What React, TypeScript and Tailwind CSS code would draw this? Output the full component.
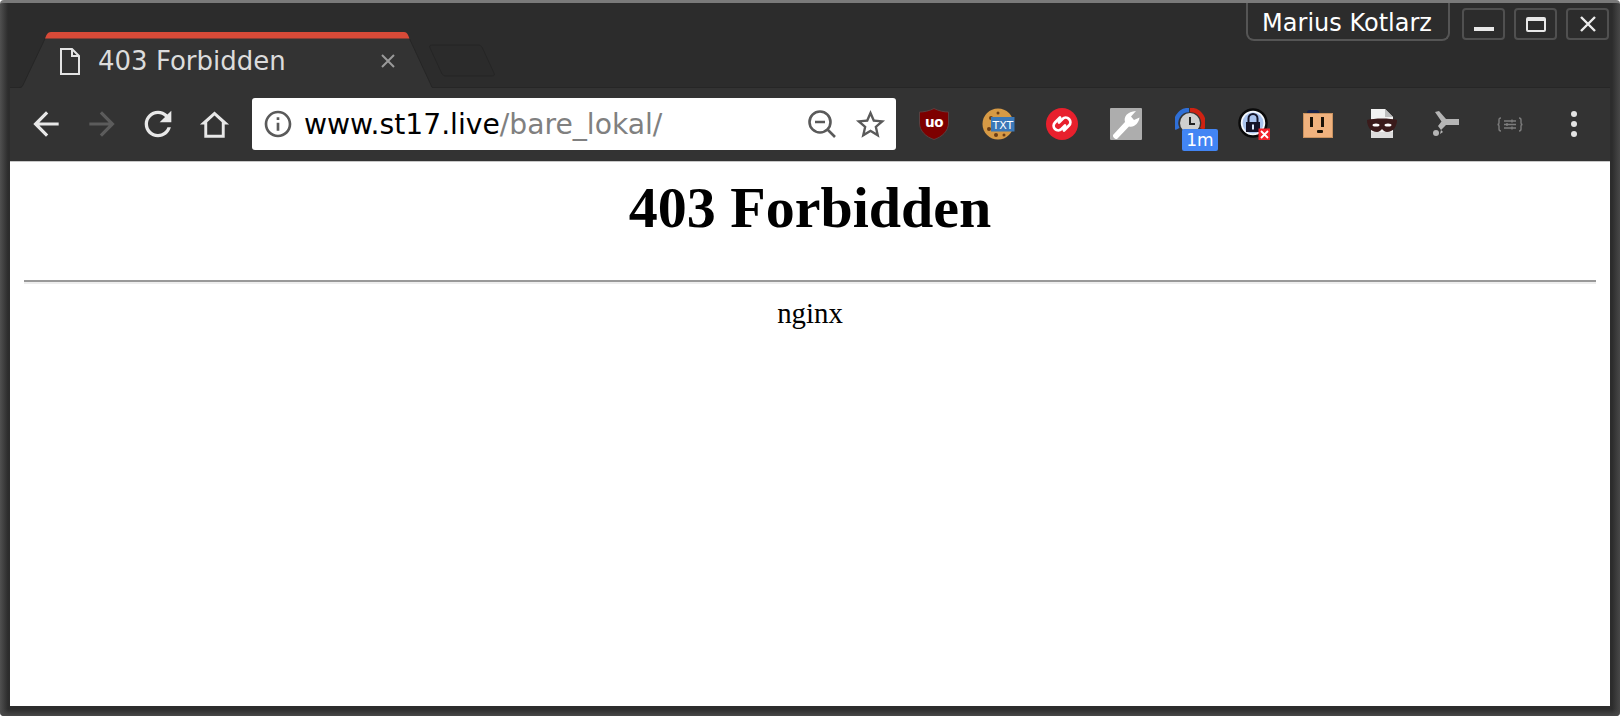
import type { ReactNode } from "react";

const sans = "font-['DejaVu_Sans',sans-serif]";

function Ext({ children }: { children: ReactNode }) {
  return <div className="relative flex h-full w-[64px] items-center justify-center">{children}</div>;
}

function TabStrip() {
  return (
    <div className="flex h-[84px] shrink-0 items-start justify-between">
      <div className="flex h-full items-end pl-[19px]">
        <div className="relative z-10 -mb-[1px] h-[56px] w-[414px]">
          <svg className="absolute inset-0" width="414" height="56" viewBox="0 0 414 56">
            <path d="M0 56C2 56 3 55 4 53L27 4.5C28 1.5 30 0 32 0H385C387 0 388.5 1.5 389.5 4.5L412 53C412.5 55 413 56 414 56Z" fill="#333333" />
            <path d="M0 55.5C2 55.5 3 55 4 53L27 4.5M389.5 4.5L412 53C412.5 55 413 55.5 414 55.5" fill="none" stroke="#262626" />
            <path d="M26 6.5L27.5 3C28.5 1 30 0 32 0H385C387 0 388 1 389 3L390.5 6.5Z" fill="#d84a38" />
          </svg>
          <div className="relative flex h-full items-center pl-[41px] pt-[2px]">
            <svg width="20" height="27" viewBox="0 0 20 27" fill="none" stroke="#e4e4e4" strokeWidth="2">
              <path d="M1 1H12L19 8V26H1Z" />
              <path d="M12 1V8H19" />
            </svg>
            <span className={`${sans} ml-[18px] w-[260px] text-[26px] leading-none text-[#dcdcdc]`}>403 Forbidden</span>
            <svg width="16" height="16" viewBox="0 0 16 16" stroke="#9a9a9a" strokeWidth="2" className="ml-[22px]">
              <path d="M2 2L14 14M14 2L2 14" />
            </svg>
          </div>
        </div>
        <svg width="68" height="34" viewBox="0 0 68 34" className="mb-[9px] -ml-[5px]">
          <path d="M4 1H50C52 1 53 2 54 3L66 29C67 31 66 32 64 32H18C16 32 15 31 14 30L2 4C1 2 2 1 4 1Z" fill="#2b2b2b" stroke="#252525" />
        </svg>
      </div>
      <div className="flex items-start pr-[11px]">
        <div className={`${sans} flex h-[38px] w-[204px] items-center justify-center rounded-b-[8px] border-2 border-t-0 border-[#555555] pr-[2px] pt-[3px] text-[24px] text-white`}>Marius Kotlarz</div>
        <div className="ml-[12px] mt-[5px] flex gap-[9px]">
          <div className="flex h-[32px] w-[43px] items-center justify-center rounded-[4px] border-2 border-[#505050]">
            <div className="mt-[10px] h-[4px] w-[20px] bg-[#e8e8e8]" />
          </div>
          <div className="flex h-[32px] w-[43px] items-center justify-center rounded-[4px] border-2 border-[#505050]">
            <div className="h-[15px] w-[20px] rounded-[2px] border-2 border-t-[4px] border-[#e8e8e8]" />
          </div>
          <div className="flex h-[32px] w-[43px] items-center justify-center rounded-[4px] border-2 border-[#505050]">
            <svg width="18" height="18" viewBox="0 0 18 18" stroke="#ececec" strokeWidth="2.4">
              <path d="M2 2L16 16M16 2L2 16" />
            </svg>
          </div>
        </div>
      </div>
    </div>
  );
}

function NavButton({ d, color, size }: { d: string; color: string; size: number }) {
  return (
    <div className="flex h-full w-[56px] items-center justify-center">
      <svg width={size} height={size} viewBox="0 0 24 24" fill={color}>
        <path d={d} />
      </svg>
    </div>
  );
}

function AddressBar() {
  return (
    <div className="ml-[10px] flex h-[52px] w-[644px] items-center rounded-[3px] bg-white pl-[10px] pr-[8px]">
      <svg width="32" height="32" viewBox="0 0 24 24" fill="#5a5a5a">
        <path d="M11 7h2v2h-2zm0 4h2v6h-2zm1-9C6.48 2 2 6.48 2 12s4.48 10 10 10 10-4.48 10-10S17.52 2 12 2zm0 18c-4.41 0-8-3.59-8-8s3.59-8 8-8 8 3.59 8 8-3.59 8-8 8z" />
      </svg>
      <div className={`${sans} ml-[10px] flex-1 pt-[2px] text-[28.2px] leading-none text-black`}>
        www.st17.live<span className="text-[#808080]">/bare_lokal/</span>
      </div>
      <svg width="30" height="30" viewBox="0 0 30 30" fill="none" stroke="#5a5a5a" strokeWidth="2.6" className="mr-[16px]">
        <circle cx="13" cy="13" r="10.5" />
        <path d="M8 13H18M20.5 20.5L28 28" />
      </svg>
      <svg width="35" height="35" viewBox="0 0 24 24" fill="#5a5a5a">
        <path d="M22 9.24l-7.19-.62L12 2 9.19 8.63 2 9.24l5.46 4.73L5.82 21 12 17.27 18.18 21l-1.63-7.03L22 9.24zM12 15.4l-3.76 2.27 1-4.28-3.32-2.88 4.38-.38L12 6.1l1.71 4.04 4.38.38-3.32 2.88 1 4.28L12 15.4z" />
      </svg>
    </div>
  );
}

function Extensions() {
  return (
    <div className="flex h-full items-center pl-[6px]">
      <Ext>
        <svg width="30" height="32" viewBox="0 0 30 32">
          <path d="M15 0.5C20 3 25 4 29.5 4V15C29.5 23 23 29 15 31.5C7 29 0.5 23 0.5 15V4C5 4 10 3 15 0.5Z" fill="#7d0000" stroke="#5a4040" />
          <text x="15" y="19" textAnchor="middle" fontFamily="DejaVu Sans" fontWeight="700" fontSize="13.5" letterSpacing="-0.5" fill="#fff">uo</text>
        </svg>
      </Ext>
      <Ext>
        <svg width="33" height="32" viewBox="0 0 33 32">
          <circle cx="16" cy="16" r="15.5" fill="#d79a45" />
          <circle cx="9" cy="10" r="2" fill="#6b3d16" />
          <circle cx="16" cy="5" r="1.5" fill="#6b3d16" />
          <circle cx="7" cy="21" r="2" fill="#6b3d16" />
          <circle cx="14" cy="27" r="2" fill="#6b3d16" />
          <circle cx="22" cy="27" r="1.5" fill="#6b3d16" />
          <rect x="9" y="9" width="23.5" height="14.5" fill="#3b78b8" />
          <text x="20.8" y="20.8" textAnchor="middle" fontFamily="DejaVu Sans" fontWeight="500" fontSize="11" fill="#fff">TXT</text>
        </svg>
      </Ext>
      <Ext>
        <svg width="32" height="32" viewBox="0 0 32 32" fill="none">
          <circle cx="16" cy="16" r="16" fill="#e8202d" />
          <path d="M14 9.5L9 14.5A4.5 4.5 0 0 0 15.5 21L19 17.5M18 22.5L23 17.5A4.5 4.5 0 0 0 16.5 11L13 14.5" stroke="#fff" strokeWidth="2.8" strokeLinecap="round" />
        </svg>
      </Ext>
      <Ext>
        <svg width="32" height="32" viewBox="0 0 32 32">
          <rect width="32" height="32" rx="1" fill="#adadad" />
          <path d="M3 27L15 14C13.5 9 17 3.5 26 3L21 8.5L24 12L29.5 9.5C29 15 24 20 19 18.5L7 31C5 31.5 2.5 29 3 27Z" fill="#fff" />
        </svg>
      </Ext>
      <Ext>
        <svg width="30" height="30" viewBox="0 0 30 30" fill="none" className="-mt-[2px] -ml-[1px]">
          <circle cx="15" cy="15" r="10" fill="#cfcfcf" />
          <path d="M2.5 21A13 13 0 0 1 14 2" stroke="#2f6fd6" strokeWidth="4.5" />
          <path d="M15 2A13 13 0 0 1 27 21" stroke="#cf2212" strokeWidth="4.5" />
          <path d="M15 9V16H20" stroke="#222" strokeWidth="2" />
        </svg>
        <div className={`${sans} absolute left-[24px] top-[41px] flex h-[22px] w-[36px] items-center justify-center rounded-[2px] bg-[#4285f4] text-[17px] leading-none text-white`}>1m</div>
      </Ext>
      <Ext>
        <svg width="32" height="32" viewBox="0 0 32 32" fill="none">
          <circle cx="15" cy="15" r="13.5" fill="#f4f7fc" stroke="#0a0a0a" strokeWidth="2.5" />
          <circle cx="15" cy="15" r="10.5" fill="#aac4ee" />
          <path d="M10.5 14V10.5A4.5 4.5 0 0 1 19.5 10.5V14" stroke="#141428" strokeWidth="2" />
          <rect x="8" y="14" width="14" height="10" fill="#141428" />
          <rect x="14" y="16.5" width="2" height="5" fill="#dbe6f8" />
          <rect x="20.5" y="20.5" width="11.5" height="11.5" fill="#f2222a" />
          <path d="M23 23L30 30M30 23L23 30" stroke="#fff" strokeWidth="1.8" />
        </svg>
      </Ext>
      <Ext>
        <svg width="30" height="28" viewBox="0 0 30 28">
          <rect x="4" y="0" width="12" height="5" rx="2.5" fill="#16224a" />
          <rect x="0.5" y="3.5" width="29" height="24" fill="#f0b27e" stroke="#c99260" />
          <rect x="7" y="7" width="3" height="10" fill="#1a1208" />
          <rect x="18" y="7" width="3" height="10" fill="#1a1208" />
          <rect x="14" y="20" width="6" height="3" rx="1" fill="#1a1208" />
        </svg>
      </Ext>
      <Ext>
        <svg width="32" height="30" viewBox="0 0 32 30">
          <path d="M5 0H19L27 8V29H5Z" fill="#f2f2f2" />
          <path d="M19 0V8H27Z" fill="#bdbdbd" />
          <path d="M5 23H27V29H5Z" fill="#dddddd" />
          <path d="M1 11C8 9 24 9 31 11C31 18 27 23 21 23C19 23 17 21 16 20C15 21 13 23 11 23C5 23 1 18 1 11Z" fill="#3a1b1b" />
          <ellipse cx="10" cy="16" rx="3.5" ry="1.6" fill="#fff" />
          <ellipse cx="22" cy="16" rx="3.5" ry="1.6" fill="#fff" />
        </svg>
      </Ext>
      <Ext>
        <svg width="28" height="26" viewBox="0 0 28 26" fill="#b5b5b5">
          <path d="M3 1L7 0L14 8H27V14H14L9 19L6 15L9.5 10.5Z" />
          <circle cx="4" cy="22" r="3" />
          <path d="M9 19L11 21L8 23Z" />
        </svg>
      </Ext>
      <Ext>
        <svg width="26" height="15" viewBox="0 0 26 15" fill="none" stroke="#7d7d7d" strokeWidth="1.4">
          <path d="M4 1C2 1 2 2 2 3V6C2 7 1 7.5 0.5 7.5C1 7.5 2 8 2 9V12C2 13 2 14 4 14M22 1C24 1 24 2 24 3V6C24 7 25 7.5 25.5 7.5C25 7.5 24 8 24 9V12C24 13 24 14 22 14" />
          <path d="M7 4H19M7 7.5H19M7 11H19M15 2.5V5.5M10 6V9M15 9.5V12.5" />
        </svg>
      </Ext>
      <Ext>
        <div className="flex flex-col gap-[4px]">
          <div className="size-[6px] rounded-full bg-[#e4e4e4]" />
          <div className="size-[6px] rounded-full bg-[#e4e4e4]" />
          <div className="size-[6px] rounded-full bg-[#e4e4e4]" />
        </div>
      </Ext>
    </div>
  );
}

function Toolbar() {
  return (
    <div className="flex h-[74px] shrink-0 items-center border-t border-[#262626] bg-[#333333] pb-[1px] pl-[8px]">
      <NavButton size={38} color="#e8e8e8" d="M20 11H7.83l5.59-5.59L12 4l-8 8 8 8 1.41-1.41L7.83 13H20v-2z" />
      <NavButton size={38} color="#5c5c5c" d="M12 4l-1.41 1.41L16.17 11H4v2h12.17l-5.58 5.59L12 20l8-8z" />
      <NavButton size={40} color="#e8e8e8" d="M17.65 6.35C16.2 4.9 14.21 4 12 4c-4.42 0-7.99 3.58-7.99 8s3.57 8 7.99 8c3.73 0 6.84-2.55 7.73-6h-2.08c-.82 2.33-3.04 4-5.65 4-3.31 0-6-2.69-6-6s2.69-6 6-6c1.66 0 3.14.69 4.22 1.78L13 11h7V4l-2.35 2.35z" />
      <NavButton size={35} color="#e8e8e8" d="M12 3L2 12h3v9h14v-9h3L12 3zm0 2.9l5 4.5V19H7v-8.6l5-4.5z" />
      <AddressBar />
      <Extensions />
    </div>
  );
}

export default function App() {
  return (
    <div className="flex h-[716px] w-[1620px] flex-col overflow-hidden rounded-[4px] border-t-[3px] border-[#7a7a7a] bg-[linear-gradient(to_top,#484848_0px,transparent_7px),linear-gradient(to_right,#505050_0px,#2c2c2c_8px,#2c2c2c_1612px,#484848_1620px)]">
      <TabStrip />
      <div className="flex flex-1 flex-col px-[10px] pb-[10px]">
        <Toolbar />
        <div className="flex-1 border-t border-[#c8c8c8] bg-white px-[14px] text-center font-['Liberation_Serif',serif] text-black">
          <h1 className="pt-[18px] text-[58px] font-bold leading-[55px]">403 Forbidden</h1>
          <div className="mt-[45px] h-[2px] bg-[#999999]" />
          <div className="h-[2px] bg-[#eeeeee]" />
          <p className="mt-[15px] text-[28.8px] leading-[28px]">nginx</p>
        </div>
      </div>
    </div>
  );
}
